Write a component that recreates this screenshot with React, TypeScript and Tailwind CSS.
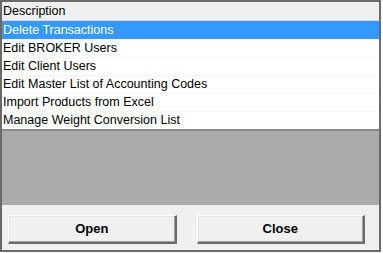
const items = [
  'Delete Transactions',
  'Edit BROKER Users',
  'Edit Client Users',
  'Edit Master List of Accounting Codes',
  'Import Products from Excel',
  'Manage Weight Conversion List',
]

function Button({ label }: { label: string }) {
  return (
    <button className="flex-1 h-[29px] bg-[#f0f0f0] border-t border-l border-t-white border-l-white border-r-2 border-b-2 border-r-[#6b6b6b] border-b-[#6b6b6b] shadow-[inset_-1px_-1px_0_#a0a0a0,inset_1px_1px_0_#e3e3e3] text-[13px] font-bold text-black">
      {label}
    </button>
  )
}

export default function App() {
  return (
    <div className="w-[383px] h-[253px] bg-white" style={{ fontFamily: '"Liberation Sans", Arial, sans-serif' }}>
      <div className="w-[381px] h-[252px] border-2 border-[#6a6a6a] flex flex-col">
        {/* List */}
        <div className="bg-white">
          <div className="h-[19px] bg-[#efefef] border-b border-[#d6d6d6] pl-[1px] text-[12.5px] leading-[18px] text-black">
            Description
          </div>
          {items.map((item, i) => (
            <div
              key={item}
              className={
                i === 0
                  ? 'h-[18px] pl-[1px] text-[12.5px] leading-[18px] bg-[#3399ff] text-white'
                  : 'h-[18px] pl-[1px] text-[12.5px] leading-[17px] text-black border-t border-[#f6f6f6]'
              }
            >
              {item}
            </div>
          ))}
        </div>
        <div className="flex-1 bg-[#ababab] border-t-2 border-[#8a8a8a]" />
        {/* Buttons */}
        <div className="h-[45px] bg-[#f0f0f0] flex gap-[20px] pl-[6px] pr-[14px] pt-[10px]">
          <Button label="Open" />
          <Button label="Close" />
        </div>
      </div>
    </div>
  )
}
